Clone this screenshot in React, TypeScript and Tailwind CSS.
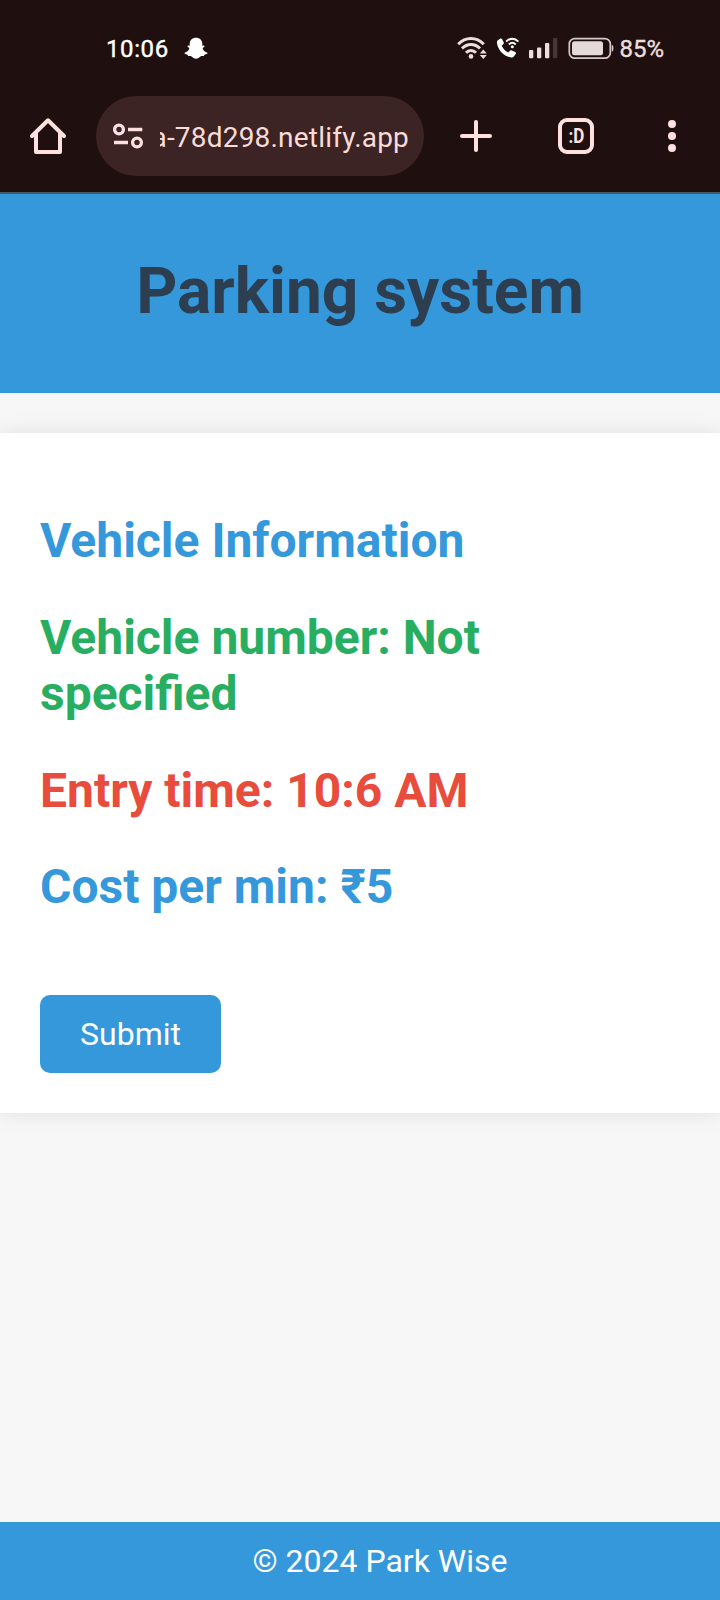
import React from "react";

function SnapIcon() {
  return (
    <svg className="ml-[15px] h-6 w-6 shrink-0" viewBox="0 0 24 24" fill="#fff">
      <path d="M12 1.800c4 0 6.300 2.600 6.300 6.200v1.800l1.300-.2c1-.1 1.300.9.5 1.500l-1.500 1c.4 2.100 1.800 3.700 4.300 4.500.9.3.7 1.100-.1 1.400l-2.400.8-.6 1.300c-1.300-.2-2.500-.2-3.400.4-1.200.9-2.500 2.200-4.400 2.200s-3.200-1.300-4.400-2.200c-.9-.6-2.100-.6-3.400-.4l-.6-1.300-2.400-.8c-.8-.3-1-1.100-.1-1.400 2.500-.8 3.900-2.400 4.300-4.500l-1.500-1c-.8-.6-.5-1.600.5-1.500l1.300.2V8C5.700 4.400 8 1.800 12 1.800z" />
    </svg>
  );
}

function WifiIcon() {
  return (
    <svg className="h-6 w-[30px] shrink-0" viewBox="0 0 30 24" fill="none" stroke="#eadfde" strokeWidth="3">
      <path d="M1.200 8.200C8.500.7 19.500.7 26.800 8.200" />
      <path d="M5 12.500c5.200-5.300 12.800-5.300 18 0" />
      <path d="M9 16.700c2.900-3 7.100-3 10 0" />
      <circle cx="14" cy="20.400" r="2.300" fill="#eadfde" stroke="none" />
      <path d="M26.300 13.500l3.500 4h-7zM26.300 23l-3.500-4h7z" fill="#eadfde" stroke="none" />
    </svg>
  );
}

function CallIcon() {
  return (
    <svg className="ml-[9px] h-6 w-6 shrink-0" viewBox="0 0 24 24" fill="none">
      <path
        d="M1.600 4.600 4 2.800c.7-.5 1.500-.4 2 .3l1.700 3.200c.3.7.2 1.300-.3 1.800L5.700 9.800c1.300 2.900 3.600 5.300 6.500 6.600l1.900-1.700c.6-.5 1.100-.6 1.700-.3l3.500 1.700c.7.4.9 1.200.4 1.900l-1.900 2.500c-.6.8-1.500 1.100-2.700.9C8 20.300 2.400 14.700 1 7.400.8 6.200.9 5.300 1.600 4.600z"
        fill="#fff"
      />
      <path d="M10.200 5.600c3.600-3.900 8.600-3.900 12.200 0M12.900 8.500c2.100-2.100 4.700-2.100 6.800 0" stroke="#fff" strokeWidth="1.900" />
      <circle cx="16.300" cy="10.800" r="1.500" fill="#fff" />
    </svg>
  );
}

function SignalIcon() {
  return (
    <svg className="ml-[8px] h-6 w-[30px] shrink-0" viewBox="0 0 30 24" fill="#eadfde">
      <rect x="1" y="14" width="4.300" height="8.300" rx="1" />
      <rect x="9" y="11.500" width="4.300" height="10.800" rx="1" />
      <rect x="17" y="7" width="4.300" height="15.300" rx="1" />
      <rect x="25" y="2" width="4.300" height="20.300" rx="1" fill="#463636" />
    </svg>
  );
}

function BatteryIcon() {
  return (
    <svg className="ml-[10px] h-6 w-[46px] shrink-0" viewBox="0 0 46 24">
      <rect x="1.300" y="2.600" width="41" height="19.600" rx="5.500" fill="none" stroke="#d5cac9" strokeWidth="1.700" />
      <rect x="4" y="5.300" width="31" height="14" rx="2.500" fill="#e3dad9" />
      <path d="M43.700 9c1.400.2 1.700 1 1.700 3.300s-.3 3.100-1.700 3.300z" fill="#d5cac9" />
    </svg>
  );
}

function StatusBar() {
  return (
    <div className="flex h-[96px] items-center pl-[106px] pr-[56px]">
      <span className="pt-px text-[24px] leading-6 tracking-[0.6px] text-white [-webkit-text-stroke:0.4px_white]">10:06</span>
      <SnapIcon />
      <div className="ml-auto flex items-center">
        <WifiIcon />
        <CallIcon />
        <SignalIcon />
        <BatteryIcon />
        <span className="ml-[5px] pt-px text-[24px] leading-6 text-[#eadfde] [-webkit-text-stroke:0.4px_#eadfde]">85%</span>
      </div>
    </div>
  );
}

function Toolbar() {
  return (
    <div className="flex h-[80px] items-center">
      <svg className="ml-[28px] h-10 w-10 shrink-0" viewBox="0 0 40 40" fill="none" stroke="#ffe2df" strokeWidth="4" strokeLinejoin="round" strokeLinecap="round">
        <path d="M4 20 20 4.300 36 20" />
        <path d="M8 17v19h24V17" />
      </svg>
      <div className="ml-[28px] flex h-[80px] w-[328px] items-center rounded-full bg-[#3b2423] pl-[17px] pr-[15px]">
        <svg className="h-[26px] w-[32px] shrink-0" viewBox="0 0 32 26" fill="none" stroke="#ffe2df" strokeWidth="3.300">
          <circle cx="6" cy="6.500" r="4.400" />
          <path d="M15 6.500h14.300M1 19.500h14" />
          <circle cx="24" cy="19.500" r="4.400" />
        </svg>
        <div className="ml-[15px] flex min-w-0 flex-1 justify-end overflow-hidden pt-1">
          <span className="whitespace-nowrap text-[28px] leading-9 tracking-[0.2px] text-[#fadbd8]">a-78d298.netlify.app</span>
        </div>
      </div>
      <svg className="ml-[36px] h-8 w-8 shrink-0" viewBox="0 0 32 32" stroke="#ffe2df" strokeWidth="4" strokeLinecap="round">
        <path d="M2 16h28M16 2v28" />
      </svg>
      <div className="ml-[66px] flex h-9 w-9 shrink-0 items-center justify-center rounded-[9px] border-4 border-[#ffe2df]">
        <span className="text-[20px] font-bold leading-5 text-[#ffe2df] [transform:scaleX(0.85)]">:D</span>
      </div>
      <div className="ml-[74px] flex flex-col gap-1">
        <i className="h-2 w-2 rounded-full bg-[#ffe2df]" />
        <i className="h-2 w-2 rounded-full bg-[#ffe2df]" />
        <i className="h-2 w-2 rounded-full bg-[#ffe2df]" />
      </div>
    </div>
  );
}

export default function App() {
  return (
    <div className="flex h-[1600px] w-[720px] flex-col overflow-hidden bg-[#f7f7f7] font-[Roboto,sans-serif]">
      <div className="h-[194px] shrink-0 border-b-2 border-[#46566a] bg-[#200f0f]">
        <StatusBar />
        <Toolbar />
      </div>
      <header className="flex h-[199px] shrink-0 items-center justify-center bg-[#3498db] pb-[4px]">
        <h1 className="text-[64px] font-bold leading-[75px] text-[#2c3e50]">Parking system</h1>
      </header>
      <main className="mt-10 flex h-[680px] shrink-0 flex-col items-start bg-white px-10 pt-20 text-[48px] font-bold leading-[56.5px] shadow-[0_0_20px_rgba(0,0,0,0.1)]">
        <h2 className="text-[#3498db]">Vehicle Information</h2>
        <h2 className="mt-10 w-[560px] text-[#27ae60]">Vehicle number: Not specified</h2>
        <h2 className="mt-10 text-[#e74c3c]">Entry time: 10:6 AM</h2>
        <h2 className="mt-10 text-[#3498db]">Cost per min: ₹5</h2>
        <button className="mt-[79.5px] h-[78px] w-[181px] rounded-[10px] bg-[#3498db] text-[32px] font-normal leading-[38px] text-white">Submit</button>
      </main>
      <footer className="mt-auto flex h-[78px] shrink-0 items-center justify-center bg-[#3498db] pl-10">
        <p className="text-[32px] leading-[38px] text-white">© 2024 Park Wise</p>
      </footer>
    </div>
  );
}
